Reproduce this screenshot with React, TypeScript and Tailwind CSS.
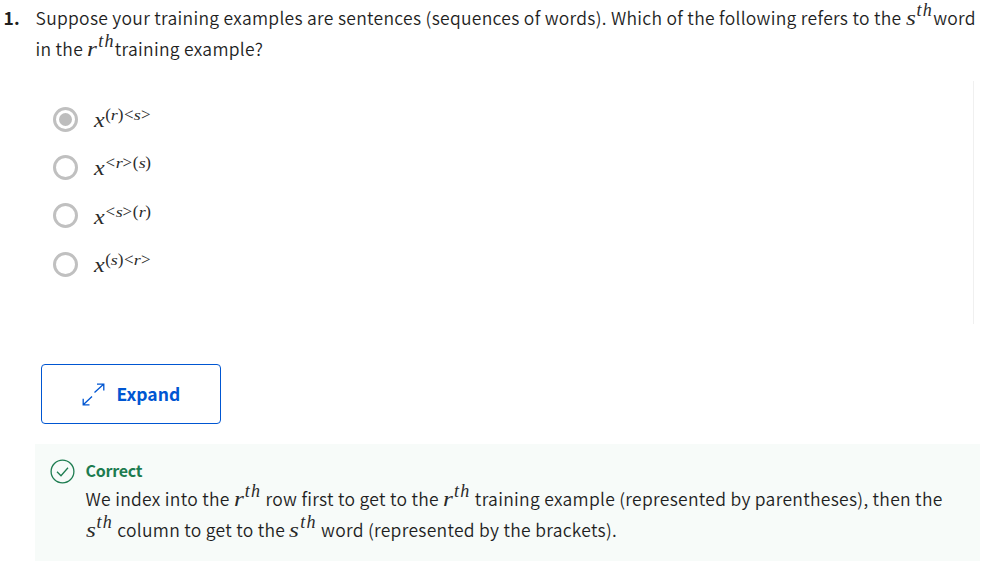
import React from "react";

function Th({ v }: { v: string }) {
  return (
    <span className="inline-flex w-[27.5px] items-baseline font-['Liberation_Serif',serif] text-[22px] font-normal italic leading-none tracking-normal text-[#2a2a2a]">
      <span className="w-[11px] origin-left scale-x-[1.15] text-[22px]">{v}</span>
      <span className="relative -top-[9px] text-[18px] leading-none tracking-[1.3px]">th</span>
    </span>
  );
}

const glyphs: Record<string, string> = {
  "(": "w-[6px] text-[17px] text-center",
  ")": "w-[6px] text-[17px] text-center",
  r: "w-[6.5px] text-[15px] italic text-center scale-x-[1.2]",
  s: "w-[6.5px] text-[15px] italic text-center scale-x-[1.2]",
  "<": "w-[10.5px] text-[17px] text-center",
  ">": "w-[10.5px] text-[17px] text-center",
};

function Option({ sup, checked }: { sup: string; checked?: boolean }) {
  return (
    <div className="flex h-[48.3px] items-center">
      <span className="flex h-[25px] w-[25px] items-center justify-center rounded-full border-[3px] border-[#c0c0c0]">
        {checked && <span className="h-[13px] w-[13px] rounded-full bg-[#bdbdbd]" />}
      </span>
      <span className="ml-[15.5px] flex items-baseline pt-[2px] font-['Liberation_Serif',serif] font-normal leading-none tracking-normal text-[#2a2a2a]">
        <i className="w-[11.5px] origin-left scale-x-[1.2] text-[20px] leading-none">x</i>
        <span className="relative -top-[7px] flex items-baseline leading-none">
          {sup.split("").map((c, i) => (
            <span key={i} className={glyphs[c] + " leading-none"}>{c}</span>
          ))}
        </span>
      </span>
    </div>
  );
}

export default function App() {
  return (
    <div className="h-[572px] w-[993px] overflow-hidden bg-white font-['Noto_Sans_CJK_SC',sans-serif] text-[17.5px] font-[350] tracking-[0.288px] text-[#1f1f1f]">
      <div className="flex h-[81px] pt-[2px] leading-[31px]">
        <div className="w-[35.5px] pl-[3.5px] font-bold">1.</div>
        <div className="whitespace-nowrap">
          <div className="h-[31px]">
            Suppose your training examples are sentences (sequences of words). Which of the following refers to the <Th v="s" />word
          </div>
          <div className="h-[31px]">
            in the <Th v="r" />training example?
          </div>
        </div>
      </div>
      <div className="h-[243px] w-[974px] border-r border-[#f0f0f0] pl-[53px] pt-[14px]">
        <Option sup="(r)<s>" checked />
        <Option sup="<r>(s)" />
        <Option sup="<s>(r)" />
        <Option sup="(s)<r>" />
      </div>
      <button className="ml-[41px] mt-[40px] flex h-[60px] w-[180px] items-center rounded-[4px] border border-[#0056d2] pl-[40px] font-bold text-[#0056d2]">
        <svg width="23" height="23" viewBox="0 0 23 23" fill="none" stroke="currentColor" strokeWidth="1.3">
          <path d="M12.5 9.5 21 1.7M15 1.2H21.8V7.5M10 13.5 1.5 21.5M1.2 15.7V21.8H7.5" />
        </svg>
        <span className="ml-[11.5px] tracking-normal">Expand</span>
      </button>
      <div className="ml-[35px] mt-[20px] flex h-[117px] w-[945px] bg-[#f7fbf9] pl-[15px] pt-[15px]">
        <svg width="25" height="25" viewBox="0 0 25 25" fill="none" stroke="#1d7c50" strokeWidth="1.3">
          <circle cx="12.5" cy="12.5" r="11.4" />
          <path d="m7 12.7 4 4 7-8" />
        </svg>
        <div className="ml-[10.5px] whitespace-nowrap">
          <div className="h-[24px] text-[16px] font-bold leading-[23px] tracking-[-0.25px] text-[#1d7c50]">Correct</div>
          <div className="h-[31px] leading-[31px]">
            We index into the <Th v="r" /> row first to get to the <Th v="r" /> training example (represented by parentheses), then the
          </div>
          <div className="h-[31px] leading-[31px]">
            <Th v="s" /> column to get to the <Th v="s" /> word (represented by the brackets).
          </div>
        </div>
      </div>
    </div>
  );
}
